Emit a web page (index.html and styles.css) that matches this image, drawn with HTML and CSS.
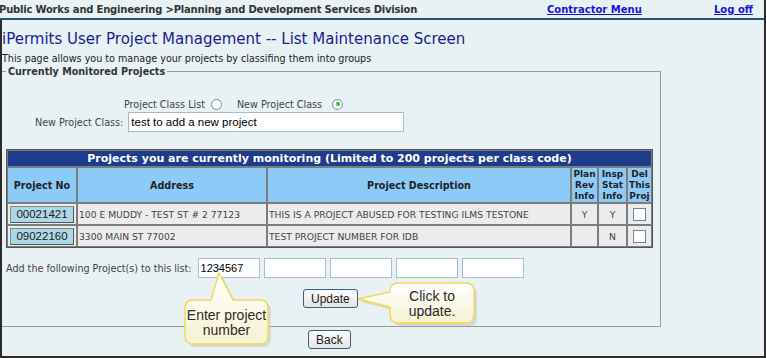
FILE: index.html
```html
<!DOCTYPE html>
<html lang="en">
<head>
    <meta charset="UTF-8">
    <title>iPermits User Project Management</title>
    <link rel="stylesheet" href="styles.css">
</head>
<body>
<div class="frame">
    <div class="topbar">
        <span class="crumb">Public Works and Engineering &gt;Planning and Development Services Division</span>
        <a class="toplink contractor" href="#">Contractor Menu</a>
        <a class="toplink logoff" href="#">Log off</a>
    </div>

    <div class="main">
        <h1 class="title">iPermits User Project Management -- List Maintenance Screen</h1>
        <p class="intro">This page allows you to manage your projects by classifing them into groups</p>

        <fieldset class="monitored">
            <legend>Currently Monitored Projects</legend>

            <div class="class-choice">
                <span>Project Class List</span><span class="radio"></span>
                <span>New Project Class</span><span class="radio checked"></span>
            </div>

            <div class="class-name">
                <span>New Project Class:</span>
                <input class="field wide" type="text" value="test to add a new project">
            </div>

            <table class="projects">
                <colgroup>
                    <col style="width: 70px">
                    <col style="width: 190px">
                    <col style="width: 304px">
                    <col style="width: 27px">
                    <col style="width: 29px">
                    <col style="width: 25px">
                </colgroup>
                <tr>
                    <th class="caption" colspan="6">Projects you are currently monitoring (Limited to 200 projects per class code)</th>
                </tr>
                <tr class="heads">
                    <th>Project No</th>
                    <th>Address</th>
                    <th>Project Description</th>
                    <th class="tiny">Plan Rev Info</th>
                    <th class="tiny">Insp Stat Info</th>
                    <th class="tiny">Del This Proj</th>
                </tr>
                <tr class="row">
                    <td><span class="projbtn">00021421</span></td>
                    <td>100 E MUDDY - TEST ST # 2 77123</td>
                    <td>THIS IS A PROJECT ABUSED FOR TESTING ILMS TESTONE</td>
                    <td class="mid">Y</td>
                    <td class="mid">Y</td>
                    <td class="mid"><span class="check"></span></td>
                </tr>
                <tr class="row">
                    <td><span class="projbtn">09022160</span></td>
                    <td>3300 MAIN ST 77002</td>
                    <td>TEST PROJECT NUMBER FOR IDB</td>
                    <td class="mid"></td>
                    <td class="mid">N</td>
                    <td class="mid"><span class="check"></span></td>
                </tr>
            </table>

            <div class="add-row">
                <span>Add the following Project(s) to this list:</span>
                <input class="field short" type="text" value="1234567">
                <input class="field short" type="text" value="">
                <input class="field short" type="text" value="">
                <input class="field short" type="text" value="">
                <input class="field short" type="text" value="">
            </div>

            <div class="update-row">
                <button class="btn">Update</button>
            </div>
        </fieldset>

        <div class="back-row">
            <button class="btn">Back</button>
        </div>
    </div>

    <svg class="callouts" width="766" height="358" viewBox="0 0 766 358">
        <defs>
            <linearGradient id="bubble" x1="0" y1="0" x2="0" y2="1">
                <stop offset="0" stop-color="#ffffff"/>
                <stop offset="1" stop-color="#f7f2d2"/>
            </linearGradient>
        </defs>
        <!-- Enter project number -->
        <path d="M193 300 H211 L219 273 L233 300 H260 Q268 300 268 308 V336 Q268 344 260 344 H193 Q185 344 185 336 V308 Q185 300 193 300 Z"
              fill="#c9c9c0" transform="translate(3 3)" opacity="0.6"/>
        <path d="M193 300 H211 L219 273 L233 300 H260 Q268 300 268 308 V336 Q268 344 260 344 H193 Q185 344 185 336 V308 Q185 300 193 300 Z"
              fill="url(#bubble)" stroke="#f2d94a" stroke-width="1.3"/>
        <text x="226.5" y="320" class="bubble-text">Enter project</text>
        <text x="226.5" y="335" class="bubble-text">number</text>

        <!-- Click to update -->
        <path d="M398 283 H466 Q474 283 474 291 V315 Q474 323 466 323 H398 Q390 323 390 315 V307 L358 299 L390 292 V291 Q390 283 398 283 Z"
              fill="#c9c9c0" transform="translate(3 3)" opacity="0.6"/>
        <path d="M398 283 H466 Q474 283 474 291 V315 Q474 323 466 323 H398 Q390 323 390 315 V307 L358 299 L390 292 V291 Q390 283 398 283 Z"
              fill="url(#bubble)" stroke="#f2d94a" stroke-width="1.3"/>
        <text x="432" y="301" class="bubble-text">Click to</text>
        <text x="432" y="316" class="bubble-text">update.</text>
    </svg>
</div>
</body>
</html>
```

FILE: styles.css
```css
body {
    margin: 0;
    background-color: #e8f1f3;
    font-family: "DejaVu Sans", Verdana, sans-serif;
    color: #333333;
}

.frame {
    position: relative;
    width: 766px;
    height: 358px;
    box-sizing: border-box;
    border-right: 2px solid #2b2b2b;
    border-bottom: 2px solid #2b2b2b;
    overflow: hidden;
}

/* top navigation strip */
.topbar {
    display: flex;
    align-items: center;
    height: 18px;
    border-bottom: 2px solid #1f5b78;
    font-size: 10px;
    font-weight: bold;
}

.crumb {
    margin-left: -1px;
    width: 548px;
    letter-spacing: -0.2px;
    color: #333333;
}

.toplink {
    color: #1515e0;
    text-decoration: underline;
}

.contractor {
    width: 167px;
}

.main {
    border-left: 2px solid #2b2b2b;
    height: 336px;
}

.title {
    margin: 0;
    padding: 8px 0 0 0;
    height: 22px;
    font-size: 15px;
    font-weight: normal;
    color: #1c1c96;
    line-height: 22px;
}

.intro {
    margin: 0;
    padding-top: 2px;
    font-size: 9.6px;
    line-height: 14px;
    color: #222222;
}

.monitored {
    margin: 0;
    width: 659px;
    box-sizing: border-box;
    padding: 0 4px 18px 4px;
    border: 1px solid #9a9a9a;
    border-left: none;
}

.monitored legend {
    padding: 0 2px;
    font-size: 9.6px;
    font-weight: bold;
    color: #333333;
}

.class-choice {
    display: flex;
    align-items: center;
    padding: 20px 0 0 118px;
    height: 14px;
    font-size: 9.6px;
    color: #444444;
}

.radio {
    display: inline-block;
    box-sizing: border-box;
    width: 11px;
    height: 11px;
    border: 1px solid #6e8ea6;
    border-radius: 50%;
    background: #ffffff;
    margin: 0 15px 0 6px;
    position: relative;
}

.radio.checked {
    margin-left: 10px;
}

.radio.checked::after {
    content: "";
    position: absolute;
    left: 2.5px;
    top: 2.5px;
    width: 4px;
    height: 4px;
    border-radius: 50%;
    background: #2fc040;
}

.class-name {
    display: flex;
    align-items: center;
    gap: 5px;
    padding: 1px 0 0 29px;
    font-size: 9.6px;
    color: #444444;
}

.field {
    box-sizing: border-box;
    height: 20px;
    margin: 0;
    padding: 1px 2px;
    border: 1px solid #a9bccb;
    background: #ffffff;
    font-family: "Liberation Sans", Arial, sans-serif;
    font-size: 11.5px;
    color: #000000;
}

.field.wide {
    width: 276px;
}

.field.short {
    width: 62px;
    font-size: 11px;
}

/* projects table */
.projects {
    margin-top: 17px;
    width: 647px;
    table-layout: fixed;
    border-collapse: separate;
    border-spacing: 0;
    border: 1px solid #555555;
    font-size: 9.2px;
}

.projects th,
.projects td {
    border: 1px solid #7d7d7d;
    padding: 0 1px;
}

.projects .caption {
    height: 15px;
    background-color: #1e3c8c;
    color: #ffffff;
    font-size: 11px;
    text-align: center;
}

.heads th {
    height: 34px;
    background-color: #8ccbf7;
    color: #222222;
    font-size: 9.6px;
    text-align: center;
}

.heads th.tiny {
    font-size: 9px;
    line-height: 11px;
    padding: 0;
}

.row td {
    height: 20px;
    background-color: #ececec;
    color: #444444;
    white-space: nowrap;
    overflow: hidden;
}

.row td.mid {
    text-align: center;
}

.projbtn {
    display: block;
    height: 15px;
    margin: 0 1px;
    background-color: #add8e6;
    border: 1px solid #7a8a96;
    border-right-color: #555;
    border-bottom-color: #555;
    font-family: "Liberation Sans", Arial, sans-serif;
    font-size: 11.5px;
    line-height: 15px;
    color: #1a1a1a;
    text-align: center;
}

.check {
    display: inline-block;
    width: 11px;
    height: 11px;
    border: 1px solid #6c86a0;
    background: #ffffff;
    vertical-align: middle;
}

.add-row {
    display: flex;
    align-items: center;
    gap: 4px;
    margin-top: 10px;
    font-size: 9.6px;
    color: #444444;
}

.add-row span {
    margin-right: 2px;
}

.update-row {
    display: flex;
    padding: 11px 0 0 297px;
}

.btn {
    height: 19px;
    padding: 0 7px;
    background: linear-gradient(#fdfdfd, #e4e4e4);
    border: 1px solid #3c5f7d;
    border-radius: 3px;
    font-family: "Liberation Sans", Arial, sans-serif;
    font-size: 12px;
    color: #1a1a1a;
}

.back-row {
    display: flex;
    padding: 3px 0 0 306px;
}

.callouts {
    position: absolute;
    left: 0;
    top: 0;
}

.bubble-text {
    font-family: "Liberation Sans", Arial, sans-serif;
    font-size: 14px;
    fill: #2b2b2b;
    text-anchor: middle;
}
```
